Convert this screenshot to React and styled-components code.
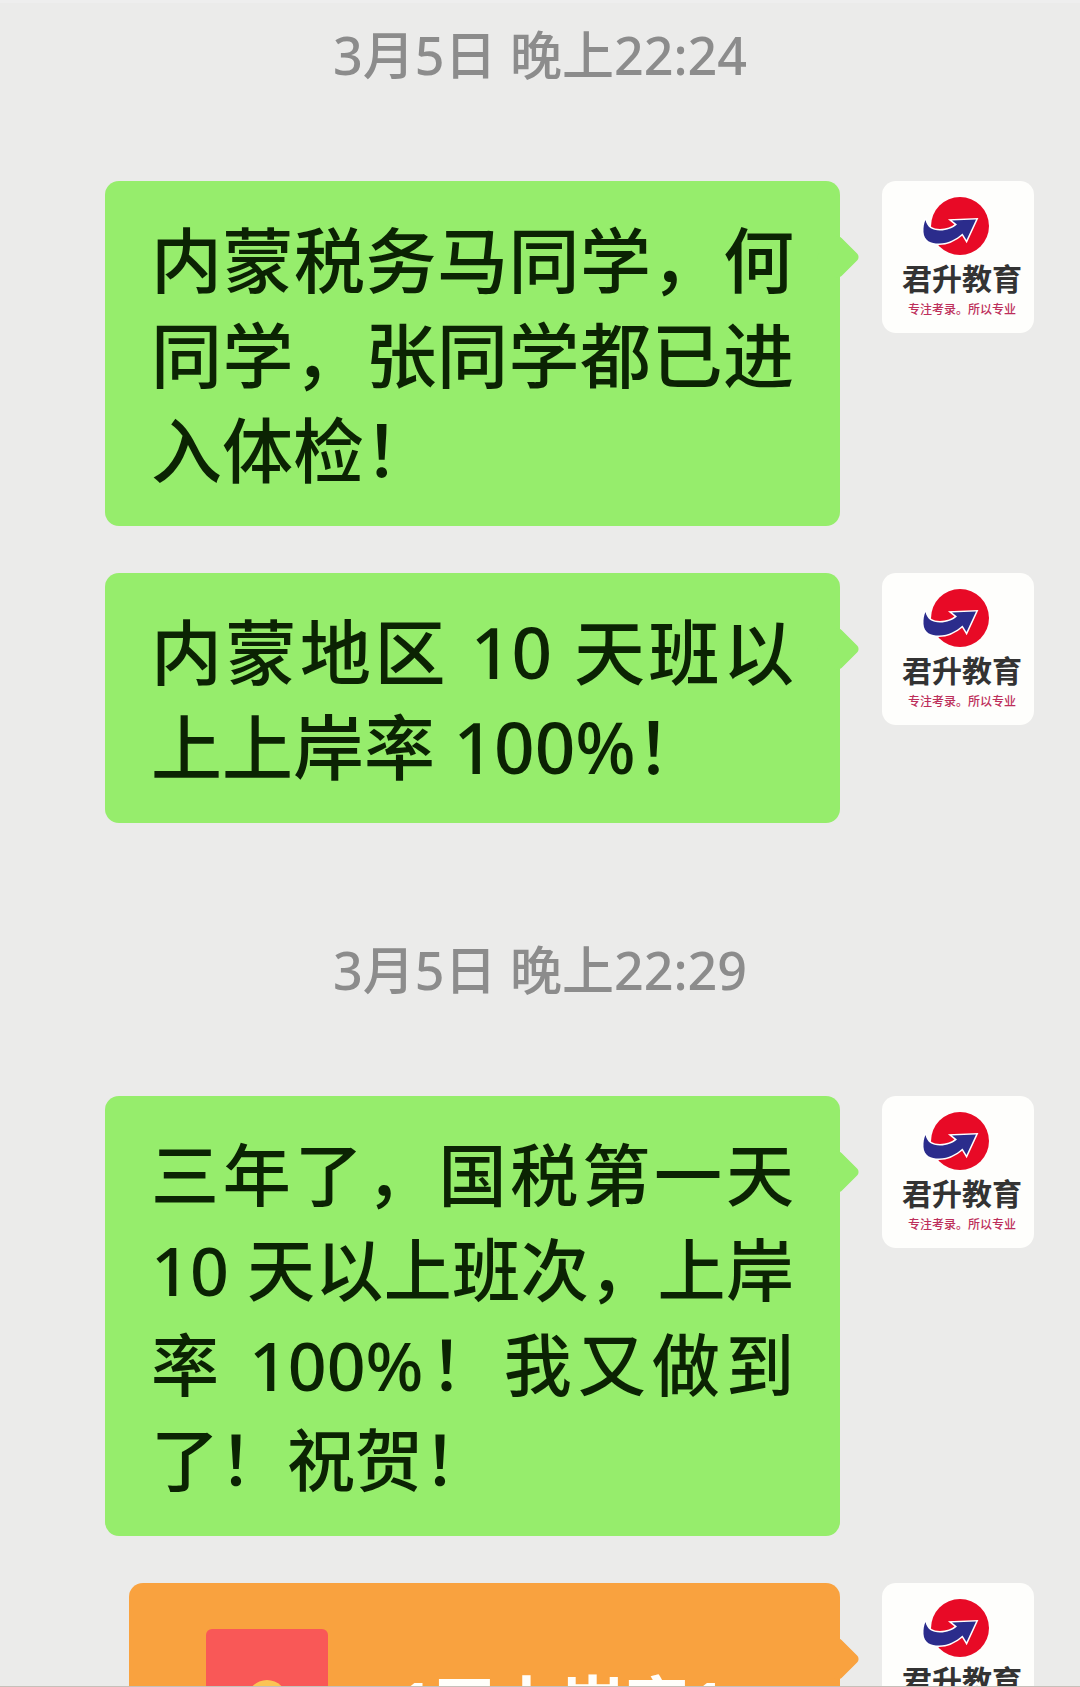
import React from 'react';
import styled, { createGlobalStyle } from 'styled-components';

const GlobalStyle = createGlobalStyle`
  * {
    box-sizing: border-box;
  }

  body {
    margin: 0;
    background: #ebebea;
    font-family: 'Noto Sans', 'Noto Sans CJK SC', sans-serif;
  }
`;

const Chat = styled.main`
  display: flex;
  flex-direction: column;
  gap: 47px;
  height: 100vh;
  overflow: hidden;
  padding: 16px 46px 0 105px;
  border-top: 3px solid #eeeeee;
  border-bottom: 1px solid #c6c0ba;
`;

const Time = styled.time`
  flex-shrink: 0;
  align-self: center;
  /* the list is padded more on the left, this centres on the window */
  margin: 64px 59px 43px 0;
  font-size: 52px;
  line-height: 72px;
  font-weight: 500;
  color: #8c8c8c;
  white-space: nowrap;

  &:first-child {
    margin-top: 0;
  }
`;

const Row = styled.article`
  display: flex;
  flex-shrink: 0;
  align-items: flex-start;
  gap: 42px;
`;

const Bubble = styled.div`
  position: relative;
  flex: 1;
  min-width: 0;
  border-radius: 14px;
  background: ${({ $color }) => $color};

  &::after {
    content: '';
    position: absolute;
    top: 60px;
    right: -14px;
    width: 32px;
    height: 32px;
    border-radius: 5px;
    background: inherit;
    transform: rotate(45deg);
  }
`;

const MessageBubble = styled(Bubble)`
  padding: 31px 46px 29px;

  p {
    margin: 0;
    font-size: ${({ $size }) => $size}px;
    line-height: 95px;
    font-weight: 500;
    color: #0b2303;
    text-align: justify;
  }
`;

const PacketBubble = styled(Bubble)`
  display: flex;
  align-items: center;
  gap: 68px;
  margin-left: 24px;
  padding: 46px 77px;

  h2 {
    margin: 0;
    padding-top: 8px;
    font-size: 64px;
    line-height: 76px;
    font-weight: 700;
    color: #fffefa;
    white-space: nowrap;
  }
`;

const AvatarCard = styled.div`
  display: flex;
  flex-direction: column;
  align-items: center;
  flex-shrink: 0;
  width: 152px;
  height: 152px;
  padding-left: 8px;
  border-radius: 14px;
  background: #fefefc;
  font-family: 'Noto Sans CJK SC', sans-serif;
`;

const AvatarName = styled.strong`
  font-size: 30px;
  line-height: 32px;
  font-weight: 700;
  color: #333333;
  white-space: nowrap;
`;

const AvatarSlogan = styled.small`
  margin-top: 8px;
  font-size: 12px;
  line-height: 16px;
  font-weight: 500;
  color: #bd2f5b;
  white-space: nowrap;
`;

const Avatar = () => {
  return (
    <AvatarCard>
      <svg width='144' height='80' viewBox='8 0 144 80' aria-hidden='true'>
        <circle cx='78' cy='45' r='29' fill='#e80a26' />
        <path
          d='M43.5 39 C45 46 50 49.5 58 49.5 C65 49.5 71 47 75 43.5 L70 39.5 L94 38.5 L84.5 59 L80.5 52.5 C74 58 67 62.5 57 62.5 C49 62.5 42 60 41.5 51 C41.3 46 42 42 43.5 39 Z'
          fill='#2b2c8c'
          stroke='#ffffff'
          strokeWidth='3'
          paintOrder='stroke'
        />
      </svg>
      <AvatarName>君升教育</AvatarName>
      <AvatarSlogan>专注考录。所以专业</AvatarSlogan>
    </AvatarCard>
  );
};

const Envelope = () => {
  return (
    <svg width='122' height='144' viewBox='0 0 122 144' aria-hidden='true'>
      <rect width='122' height='144' rx='6' fill='#f95857' />
      <circle cx='61' cy='71' r='20' fill='#fbc455' />
    </svg>
  );
};

const Message = ({ text, size = 71 }) => {
  return (
    <Row>
      <MessageBubble $color='#96ed6c' $size={size}>
        <p>{text}</p>
      </MessageBubble>
      <Avatar />
    </Row>
  );
};

const App = () => {
  return (
    <>
      <GlobalStyle />
      <Chat>
        <Time>3月5日 晚上22:24</Time>
        <Message text='内蒙税务马同学，何同学，张同学都已进入体检！' />
        <Message text='内蒙地区 10 天班以上上岸率 100%！' />
        <Time>3月5日 晚上22:29</Time>
        <Message
          size={68}
          text='三年了，国税第一天10 天以上班次，上岸率 100%！我又做到了！祝贺！'
        />
        <Row>
          <PacketBubble $color='#f9a23f'>
            <Envelope />
            <h2>1天上岸率1</h2>
          </PacketBubble>
          <Avatar />
        </Row>
      </Chat>
    </>
  );
};

export default App;
